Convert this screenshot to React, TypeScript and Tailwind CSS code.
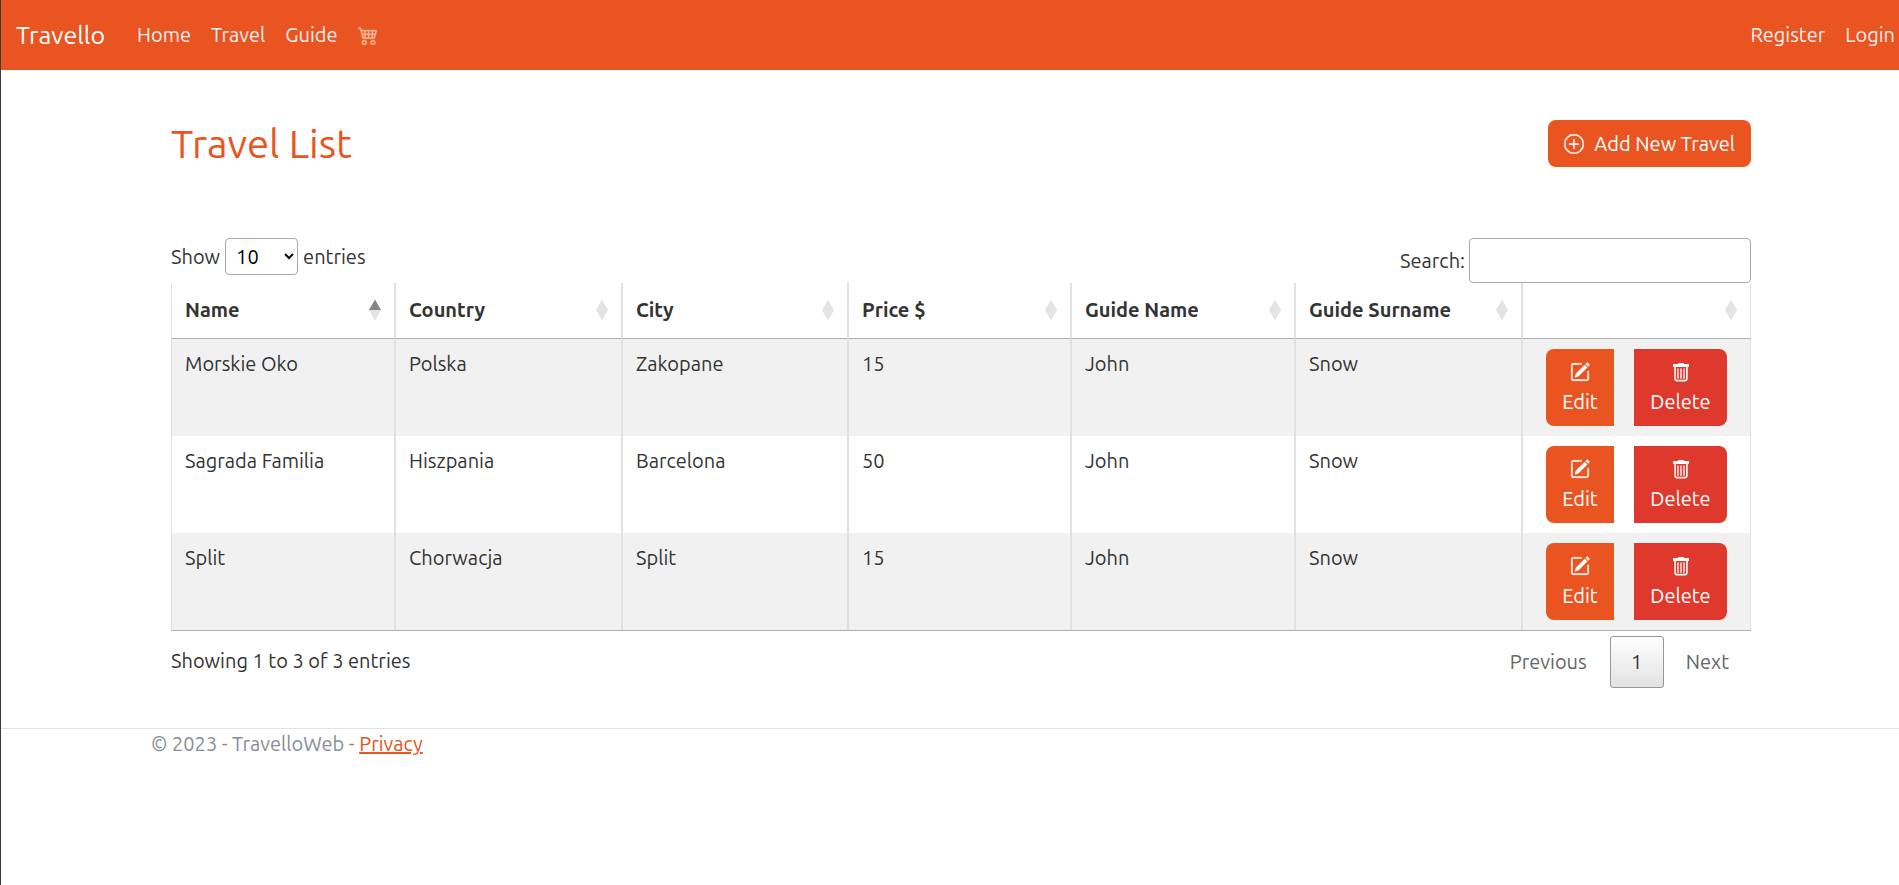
import { useState } from "react";
import { BsCart4, BsPencilSquare, BsPlusCircle } from "react-icons/bs";

const columns = [
  { label: "Name", width: "w-[224px]" },
  { label: "Country", width: "w-[227px]" },
  { label: "City", width: "w-[226px]" },
  { label: "Price $", width: "w-[223px]" },
  { label: "Guide Name", width: "w-[224px]" },
  { label: "Guide Surname", width: "w-[227px]" },
  { label: "", width: "w-[229px]" },
];

const travels = [
  ["Morskie Oko", "Polska", "Zakopane", "15", "John", "Snow"],
  ["Sagrada Familia", "Hiszpania", "Barcelona", "50", "John", "Snow"],
  ["Split", "Chorwacja", "Split", "15", "John", "Snow"],
];

function SortIcon({ active }: { active: boolean }) {
  return (
    <svg viewBox="0 0 12 22" className="h-[22px] w-3 shrink-0" aria-hidden="true">
      <path d="M6 0.5 L12 11 H0 Z" fill={active ? "#858585" : "#e4e4e4"} />
      <path d="M0 11 H12 L6 21.5 Z" fill="#e4e4e4" />
    </svg>
  );
}

function TrashIcon() {
  return (
    <svg viewBox="0 0 20 20" className="size-5" fill="none" aria-hidden="true">
      <path
        d="M2.6 2 H7 L7.6 1 H12.4 L13 2 H17.4 C17.8 2 18 2.3 18 2.6 V4.4 C18 4.8 17.8 5 17.4 5 H2.6 C2.2 5 2 4.8 2 4.4 V2.6 C2 2.3 2.2 2 2.6 2 Z"
        fill="currentColor"
      />
      <path
        d="M4.1 4.5 V16.6 C4.1 17.8 4.9 18.6 6 18.6 H14 C15.1 18.6 15.9 17.8 15.9 16.6 V4.5"
        stroke="currentColor"
        strokeWidth="1.6"
      />
      <path d="M7 7 V16.3 M10 7 V16.3 M13 7 V16.3" stroke="currentColor" strokeWidth="1.3" strokeLinecap="round" />
    </svg>
  );
}

function Navbar() {
  return (
    <nav className="flex h-[70px] items-center bg-[#e95420] pr-1 pl-[15px] text-[#eceef0]">
      <a href="#" className="mr-8 text-[25px] text-white">Travello</a>
      <div className="flex items-center gap-5">
        <a href="#">Home</a>
        <a href="#">Travel</a>
        <a href="#">Guide</a>
        <a href="#" aria-label="Cart" className="text-[#f6b39b]">
          <BsCart4 className="size-5" strokeWidth="0.3" />
        </a>
      </div>
      <div className="ml-auto flex items-center gap-5">
        <a href="#">Register</a>
        <a href="#">Login</a>
      </div>
    </nav>
  );
}

function TravelTable() {
  return (
    <table className="w-full table-fixed border-separate border-spacing-0 border-b border-[#b0b0b0]">
      <colgroup>
        {columns.map((c) => (
          <col key={c.label} className={c.width} />
        ))}
      </colgroup>
      <thead>
        <tr>
          {columns.map((c, i) => (
            <th
              key={c.label}
              className="h-14 border-x border-b border-x-[#dee2e6] border-b-[#b0b0b0] px-[13px] pb-0.5 text-left font-bold"
            >
              <div className="flex items-center justify-between">
                <span className="whitespace-nowrap">{c.label}</span>
                <SortIcon active={i === 0} />
              </div>
            </th>
          ))}
        </tr>
      </thead>
      <tbody>
        {travels.map((row) => (
          <tr key={row[0]} className="odd:bg-[#f1f1f1]">
            {row.map((cell, i) => (
              <td key={i} className="border-x border-[#dee2e6] px-[13px] py-2.5 align-top">
                {cell}
              </td>
            ))}
            <td className="border-x border-[#dee2e6] py-2.5">
              <div className="flex justify-center gap-5">
                <a href="#" className="flex h-[77px] w-[68px] flex-col items-center rounded-l-lg bg-[#e95420] pt-2 text-white">
                  <span className="flex h-[30px] items-center">
                    <BsPencilSquare className="size-5" strokeWidth="0.3" />
                  </span>
                  Edit
                </a>
                <a href="#" className="flex h-[77px] w-[93px] flex-col items-center rounded-r-lg bg-[#df382c] pt-2 text-white">
                  <span className="flex h-[30px] items-center">
                    <TrashIcon />
                  </span>
                  Delete
                </a>
              </div>
            </td>
          </tr>
        ))}
      </tbody>
    </table>
  );
}

export default function App() {
  const [size, setSize] = useState("10");
  const [query, setQuery] = useState("");
  return (
    <div className="min-h-screen border-l border-[#3c3c3c] bg-white font-['Ubuntu','Noto_Sans',sans-serif] text-[20px] leading-[30px] text-[#333]">
      <Navbar />
      <div className="pl-[22px]">
        <main className="mx-auto max-w-[1650px] px-[35px] pt-[50px] pb-10">
          <div className="flex items-start justify-between">
            <h1 className="text-[40px] leading-[48px] text-[#e95420]">Travel List</h1>
            <a href="#" className="flex h-[47px] items-center gap-2.5 rounded-lg bg-[#e95420] px-4 text-white">
              <BsPlusCircle className="size-5" strokeWidth="0.3" />
              Add New Travel
            </a>
          </div>

          <div className="mt-[70px] flex items-start justify-between">
            <label className="flex items-center gap-[5px]">
              Show
              <select
                value={size}
                onChange={(e) => setSize(e.target.value)}
                className="h-[37px] w-[73px] rounded-[4px] border border-[#aaa] bg-white px-[6px] text-black"
              >
                <option>10</option>
                <option>25</option>
                <option>50</option>
                <option>100</option>
              </select>
              entries
            </label>
            <label className="flex items-center gap-1">
              Search:
              <input
                type="search"
                value={query}
                onChange={(e) => setQuery(e.target.value)}
                className="h-[45px] w-[282px] rounded-[4px] border border-[#aaa] px-2"
              />
            </label>
          </div>

          <TravelTable />

          <div className="flex items-start justify-between pt-[5px]">
            <p className="pt-[10px]">Showing 1 to 3 of 3 entries</p>
            <div className="flex h-[52px] items-center text-[#666]">
              <button type="button" className="px-[23px]">Previous</button>
              <button
                type="button"
                className="h-[52px] w-[54px] rounded-[3px] border border-[#979797] bg-linear-to-b from-white to-[#e2e2e2] text-[#333]"
              >
                1
              </button>
              <button type="button" className="px-[22px]">Next</button>
            </div>
          </div>
        </main>
      </div>
      <footer className="border-t border-[#dee2e6] pl-[22px] text-[#868e96]">
        <div className="mx-auto max-w-[1650px] px-[15px]">
          © 2023 - TravelloWeb -{" "}
          <a href="#" className="text-[#e95420] underline">Privacy</a>
        </div>
      </footer>
    </div>
  );
}
